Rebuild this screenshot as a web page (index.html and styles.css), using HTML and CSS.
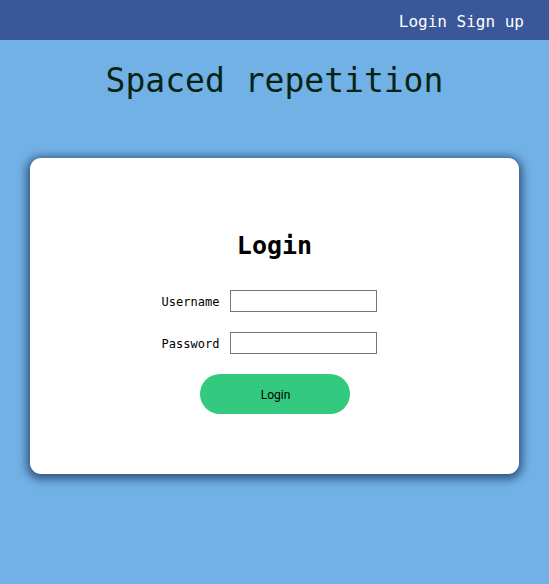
FILE: index.html
```html
<!DOCTYPE html>
<html>
<head>
<meta charset="utf-8">
<link rel="stylesheet" href="styles.css">
</head>
<body>
<nav class="topbar">
  <a class="navlink" href="#">Login</a>
  <a class="navlink" href="#">Sign up</a>
</nav>
<h1 class="title">Spaced repetition</h1>
<main class="card">
  <h2 class="card-title">Login</h2>
  <form class="form">
    <div class="row">
      <label class="label" for="u">Username</label>
      <input class="input" id="u" type="text">
    </div>
    <div class="row">
      <label class="label" for="p">Password</label>
      <input class="input" id="p" type="password">
    </div>
    <button class="btn" type="button">Login</button>
  </form>
</main>
</body>
</html>
```
FILE: styles.css
```css
html, body {
  margin: 0;
  padding: 0;
}
body {
  background: #72b1e6;
  font-family: "DejaVu Sans Mono", "Liberation Mono", monospace;
  height: 584px;
}
.topbar {
  height: 40px;
  background: #3a5899;
  display: flex;
  justify-content: flex-end;
  align-items: center;
  gap: 9.6px;
  padding-right: 25px;
  box-sizing: border-box;
  padding-top: 3px;
}
.navlink {
  color: #ffffff;
  text-decoration: none;
  font-size: 16px;
}
.title {
  margin: 21px 0 0;
  text-align: center;
  font-size: 33px;
  font-weight: normal;
  color: #062414;
  line-height: 40px;
}
.card {
  margin: 57px 30px 0;
  height: 316px;
  background: #ffffff;
  border-radius: 11px;
  box-shadow: 0 2px 10px 3px rgba(20, 50, 90, 0.75);
  display: flex;
  flex-direction: column;
  align-items: center;
  box-sizing: border-box;
  padding-top: 72px;
}
.card-title {
  margin: 0;
  font-size: 25px;
  line-height: 32px;
  font-weight: bold;
  color: #000;
}
.form {
  display: flex;
  flex-direction: column;
  align-items: center;
  margin-top: 28px;
}
.row {
  display: flex;
  align-items: center;
  gap: 11px;
  padding-right: 10px;
  margin-bottom: 20px;
}
.label {
  font-size: 12px;
  color: #000;
  padding-top: 1px;
}
.input {
  width: 147px;
  height: 22px;
  box-sizing: border-box;
  border: 1px solid #767676;
  margin: 0;
  padding: 0 3px;
}
.btn {
  margin-left: 2px;
  width: 150px;
  height: 40px;
  border: none;
  border-radius: 20px;
  background: #33c97f;
  color: #000;
  font-family: Roboto, "Liberation Sans", sans-serif;
  font-size: 12px;
  padding-top: 2px;
}
```
